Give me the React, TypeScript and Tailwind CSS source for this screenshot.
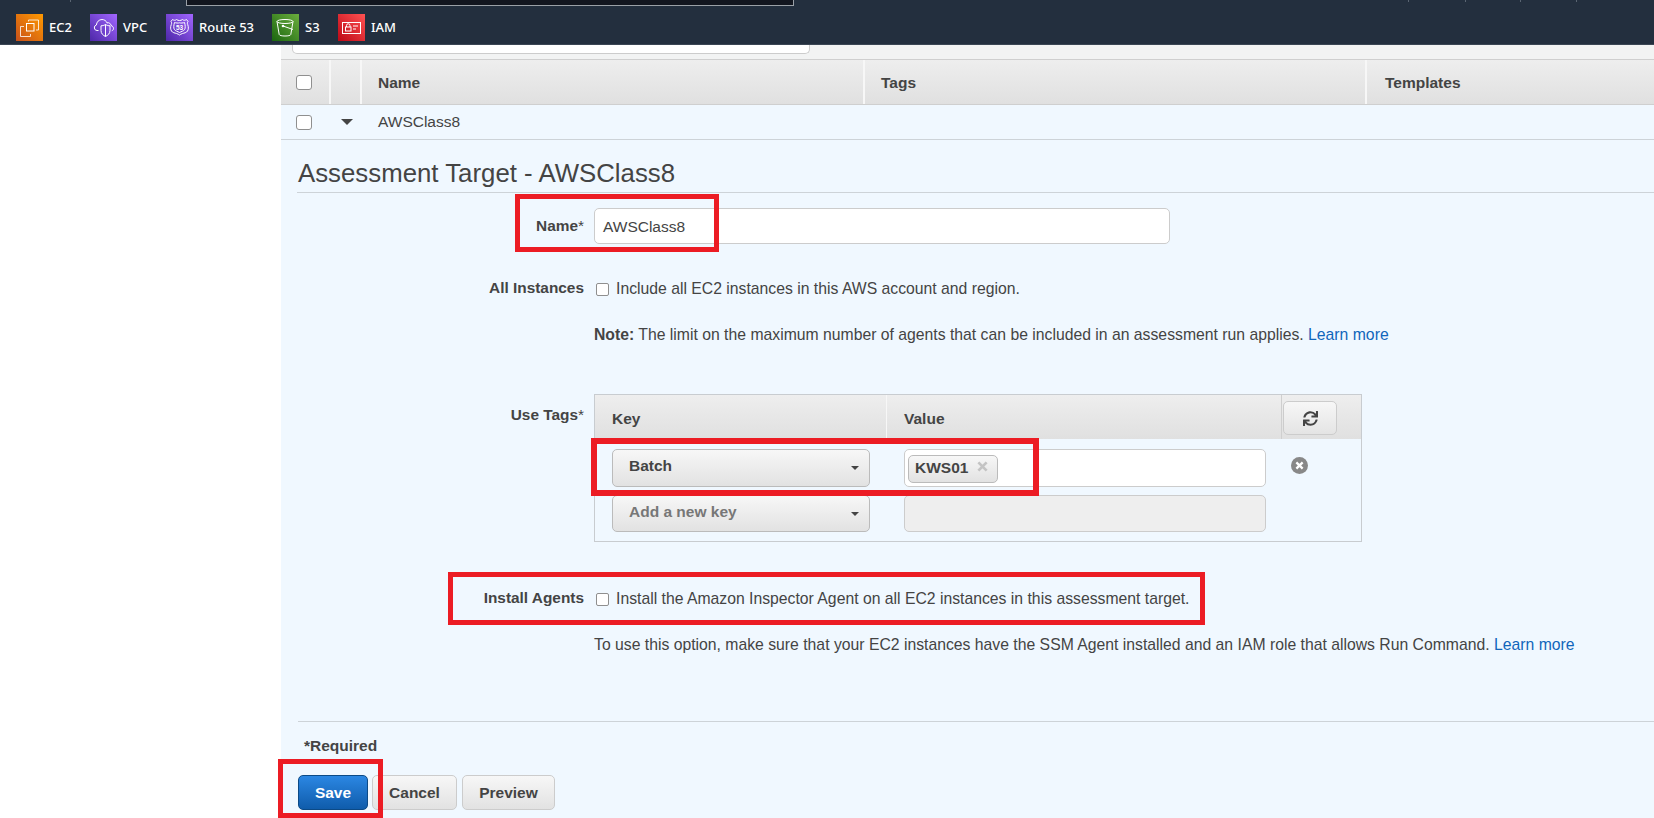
import React from "react";
import { FaSync } from "react-icons/fa";

const Ec2Icon = () => (
  <svg viewBox="0 0 27 27" className="w-[27px] h-[27px]">
    <defs>
      <linearGradient id="ec2g" x1="0" y1="1" x2="1" y2="0">
        <stop offset="0" stopColor="#c8511b" />
        <stop offset="1" stopColor="#ff9900" />
      </linearGradient>
    </defs>
    <rect width="27" height="27" fill="url(#ec2g)" />
    <g fill="none" stroke="#fff" strokeWidth="1">
      <rect x="10.5" y="9.5" width="7.5" height="7.5" />
      <path d="M12.5 7.5v-1.5h10v10h-2.5M8 12.5H4.500v10h10v-2.500" opacity=".8" />
    </g>
  </svg>
);

const VpcIcon = () => (
  <svg viewBox="0 0 27 27" className="w-[27px] h-[27px]">
    <defs>
      <linearGradient id="vpcg" x1="0" y1="1" x2="1" y2="0">
        <stop offset="0" stopColor="#4d27a8" />
        <stop offset="1" stopColor="#a166ff" />
      </linearGradient>
    </defs>
    <rect width="27" height="27" fill="url(#vpcg)" />
    <g fill="none" stroke="#fff" strokeWidth="1">
      <path d="M8.5 16.5H7a2.8 2.8 0 0 1-.6-5.5c.2-3 2.500-5.500 5.600-5.500 2.300 0 4.200 1.300 5 3.400a3 3 0 0 1 4 2.600c1.500.4 2.500 1.700 2.500 3 0 1-.7 2-1.700 2.300" />
      <path d="M15.500 10.500c1.700 1 3 1.300 4.500 1.300v4.700c0 3-2 4.800-4.500 6-2.500-1.200-4.500-3-4.500-6v-4.700c1.500 0 2.800-.3 4.500-1.300z" />
      <path d="M15.500 10.500v12" />
    </g>
  </svg>
);

const Route53Icon = () => (
  <svg viewBox="0 0 27 27" className="w-[27px] h-[27px]">
    <defs>
      <linearGradient id="r53g" x1="0" y1="1" x2="1" y2="0">
        <stop offset="0" stopColor="#4d27a8" />
        <stop offset="1" stopColor="#a166ff" />
      </linearGradient>
    </defs>
    <rect width="27" height="27" fill="url(#r53g)" />
    <g fill="none" stroke="#fff" strokeWidth="1">
      <path d="M6.500 5.500c1.500 1 3 1 4 0 1 .8 2 1 3 1s2-.2 3-1c1 1 2.500 1 4 0l1.500 2c-.8 1-.8 2-.3 3 1 2.500.8 5-.2 6.500-1 1.800-3.500 2-5 2.500-1.300.4-2.300 1-3 1.500-.7-.5-1.700-1.100-3-1.500-1.500-.5-4-.7-5-2.500-1-1.500-1.200-4-.2-6.500.5-1 .5-2-.3-3z" />
      <path d="M8.500 8.500c1.500.5 3.500.8 5 .3 1.500.5 3.500.2 5-.3.800 2.500 1 5.500.2 7-1 1.500-3.500 2-5.200 3-1.700-1-4.200-1.500-5.200-3-.8-1.500-.6-4.500.2-7z" />
    </g>
    <text x="13.5" y="15.8" textAnchor="middle" fontSize="6.5" fontFamily="'Liberation Sans',sans-serif" fontWeight="700" fill="#fff">53</text>
  </svg>
);

const S3Icon = () => (
  <svg viewBox="0 0 27 27" className="w-[27px] h-[27px]">
    <defs>
      <linearGradient id="s3g" x1="0" y1="1" x2="1" y2="0">
        <stop offset="0" stopColor="#1b660f" />
        <stop offset="1" stopColor="#6cae3e" />
      </linearGradient>
    </defs>
    <rect width="27" height="27" fill="url(#s3g)" />
    <g fill="none" stroke="#fff" strokeWidth="1">
      <ellipse cx="13" cy="7.5" rx="8" ry="2" />
      <path d="M5 7.500l2.200 13c.3 1 2.700 1.500 5.800 1.500s5.500-.5 5.800-1.500l2.200-13" />
      <path d="M11 12l10 3.500" />
    </g>
    <circle cx="11" cy="12" r="1.300" fill="#fff" />
  </svg>
);

const IamIcon = () => (
  <svg viewBox="0 0 27 27" className="w-[27px] h-[27px]">
    <defs>
      <linearGradient id="iamg" x1="0" y1="1" x2="1" y2="0">
        <stop offset="0" stopColor="#bd0816" />
        <stop offset="1" stopColor="#ff5252" />
      </linearGradient>
    </defs>
    <rect width="27" height="27" fill="url(#iamg)" />
    <g fill="none" stroke="#fff" strokeWidth="1">
      <rect x="4.5" y="8.5" width="18" height="11" />
      <rect x="7.5" y="13" width="5.5" height="4" />
      <path d="M8.500 13v-1.500a1.700 1.700 0 0 1 3.500 0V13M15 12h5M15 15h3" />
    </g>
  </svg>
);

const services = [
  { name: "EC2", icon: <Ec2Icon />, cls: "w-[74px]" },
  { name: "VPC", icon: <VpcIcon />, cls: "w-[76px]" },
  { name: "Route 53", icon: <Route53Icon />, cls: "w-[106px]" },
  { name: "S3", icon: <S3Icon />, cls: "w-[66px]" },
  { name: "IAM", icon: <IamIcon />, cls: "w-[70px]" },
];

const Checkbox = ({ small }: { small?: boolean }) => (
  <span
    className={`inline-block shrink-0 bg-white border border-[#8f8f8f] ${
      small ? "w-[13px] h-[13px] rounded-[2px]" : "w-[16px] h-[15px] rounded-[3px]"
    }`}
  />
);

const Dropdown = ({ label, muted, height, textClass }: { label: string; muted?: boolean; height: string; textClass: string }) => (
  <div className={`flex items-center justify-between w-[258px] pl-[16px] pr-[10px] rounded-[5px] border border-[#bbb] bg-linear-to-b from-[#f7f7f7] to-[#e2e2e2] ${height}`}>
    <span className={`font-bold text-[15.5px] ${textClass} ${muted ? "text-[#777]" : "text-[#444]"}`}>{label}</span>
    <span className="inline-block w-0 h-0 border-x-[4px] border-x-transparent border-t-[4px] border-t-[#444]" />
  </div>
);

const Field = ({
  label,
  children,
  className,
  labelClass,
}: {
  label: React.ReactNode;
  children: React.ReactNode;
  className?: string;
  labelClass?: string;
}) => (
  <div className={`flex items-start ${className ?? ""}`}>
    <div className={`w-[313px] shrink-0 pr-[10px] text-right font-bold text-[15.4px] text-[#444] ${labelClass ?? ""}`}>{label}</div>
    <div className="flex-1 min-w-0">{children}</div>
  </div>
);

const Btn = ({ children, className }: { children: React.ReactNode; className: string }) => (
  <button className={`h-[35px] rounded-[5px] border font-bold text-[15.5px] ${className}`}>{children}</button>
);

const RedBox = ({ className }: { className: string }) => (
  <div className={`absolute border-[#ec1c24] pointer-events-none ${className}`} />
);

export default function App() {
  return (
    <div className="relative w-[1654px] h-[818px] overflow-hidden bg-white flex flex-col text-[#444] font-['Liberation_Sans',Arial,sans-serif]">
      <header className="relative h-[45px] shrink-0 bg-[#232f3e] border-b border-[#3b4654]">
        <div className="absolute left-[186px] top-0 w-[608px] h-[6px] bg-[#12161f] border-x border-b border-[#9aa0a6]" />
        <span className="absolute left-[70px] top-0 w-px h-[2px] bg-[#5a6572]" />
        <span className="absolute left-[1408px] top-0 w-px h-[2px] bg-[#5a6572]" />
        <span className="absolute left-[1465px] top-0 w-px h-[2px] bg-[#5a6572]" />
        <span className="absolute left-[1520px] top-0 w-px h-[2px] bg-[#5a6572]" />
        <span className="absolute left-[1576px] top-0 w-px h-[2px] bg-[#5a6572]" />
        <nav className="flex items-center h-full pl-[16px] pt-[10px] font-['Noto_Sans',sans-serif]">
          {services.map((s) => (
            <div key={s.name} className={`flex items-center gap-[6px] shrink-0 ${s.cls}`}>
              {s.icon}
              <span className="text-[13px] font-medium text-white mt-[1px]">{s.name}</span>
            </div>
          ))}
        </nav>
      </header>

      <div className="flex flex-1 min-h-0">
        <aside className="w-[281px] shrink-0" />
        <main className="flex-1 min-w-0 bg-[#f0f8ff] flex flex-col">
          <div className="bg-[#f2f3f3] h-[14px] pl-[11px] pr-[844px]">
            <div className="h-[9px] bg-white border-x border-b border-[#ccc] rounded-b-[5px]" />
          </div>
          <div className="flex h-[46px] bg-linear-to-b from-[#eeeeee] to-[#e0e0e0] border-y border-[#cfcfcf] font-bold text-[15.5px] text-[#444]">
            <div className="w-[48px] flex items-center pl-[15px]"><Checkbox /></div>
            <div className="w-[31px] border-l-2 border-[#f7f7f7]" />
            <div className="w-[503px] border-l-2 border-[#f7f7f7] pl-[16px] pt-[1px] flex items-center">Name</div>
            <div className="w-[502px] border-l-2 border-[#f7f7f7] pl-[16px] pt-[1px] flex items-center">Tags</div>
            <div className="flex-1 border-l-2 border-[#f7f7f7] pl-[18px] pt-[1px] flex items-center">Templates</div>
          </div>
          <div className="flex items-center h-[35px] border-b border-[#cdd3d8] text-[15.5px]">
            <div className="w-[60px] pl-[15px] flex items-center"><Checkbox /></div>
            <div className="w-[37px] flex items-center">
              <span className="inline-block w-0 h-0 border-x-[6px] border-x-transparent border-t-[6px] border-t-[#444]" />
            </div>
            <span className="-mt-[1px]">AWSClass8</span>
          </div>

          <h1 className="ml-[16px] pl-[1px] mt-[20px] pb-[5px] border-b border-[#cdd3d8] text-[25.8px] leading-[27px] font-normal text-[#444]">
            Assessment Target - AWSClass8
          </h1>

          <Field label={<>Name<span className="font-normal">*</span></>} className="mt-[15px] leading-[36px]">
            <div className="w-[576px] h-[36px] px-[8px] rounded-[5px] border border-[#ccc] bg-white text-[15.5px] leading-[36px] text-[#444]">
              AWSClass8
            </div>
          </Field>

          <Field label="All Instances" className="mt-[35px]" labelClass="-mt-[3px]">
            <div className="flex items-center gap-[7px] pl-[2px] text-[15.75px] leading-[20px]">
              <Checkbox small />
              <span>Include all EC2 instances in this AWS account and region.</span>
            </div>
            <p className="mt-[26px] text-[15.75px] leading-[20px]">
              <b>Note:</b> The limit on the maximum number of agents that can be included in an assessment run applies.{" "}
              <span className="text-[#1166bb]">Learn more</span>
            </p>
          </Field>

          <Field label={<>Use Tags<span className="font-normal">*</span></>} className="mt-[49px]" labelClass="pt-[9px]">
            <div className="w-[768px] border border-[#c8ccd0]">
              <div className="flex h-[44px] bg-linear-to-b from-[#eeeeee] to-[#e0e0e0] font-bold text-[15.5px]">
                <div className="w-[291px] pl-[17px] pt-[12px]">Key</div>
                <div className="w-[395px] border-l border-[#f7f7f7] pl-[17px] pt-[12px]">Value</div>
                <div className="flex-1 border-l border-[#cfcfcf] pl-[1px] pt-[6px]">
                  <div className="w-[54px] h-[34px] rounded-[5px] border border-[#ccc] bg-linear-to-b from-[#f7f7f7] to-[#e4e4e4] flex items-center justify-center">
                    <FaSync className="w-[15px] h-[15px] text-[#444]" />
                  </div>
                </div>
              </div>
              <div className="flex pl-[17px] pt-[10px] pb-[9px]">
                <div className="flex flex-col gap-[8px] w-[258px] shrink-0">
                  <Dropdown label="Batch" height="h-[38px]" textClass="-mt-[4px]" />
                  <Dropdown label="Add a new key" muted height="h-[37px]" textClass="-mt-[3px]" />
                </div>
                <div className="flex flex-col gap-[8px] ml-[34px]">
                  <div className="w-[362px] h-[38px] rounded-[5px] border border-[#ccc] bg-white pl-[3px] pt-[5px]">
                    <div className="inline-flex items-center h-[28px] w-[90px] pl-[6px] pb-[2px] rounded-[5px] border border-[#bbb] bg-linear-to-b from-[#f7f7f7] to-[#e2e2e2] font-bold text-[15.5px]">
                      KWS01
                      <svg viewBox="0 0 12 12" className="ml-[9px] -mt-[3px] w-[11px] h-[11px]" stroke="#c4c4c4" strokeWidth="3">
                        <path d="M1.5 1.5l9 9M10.500 1.500l-9 9" />
                      </svg>
                    </div>
                  </div>
                  <div className="w-[362px] h-[37px] rounded-[5px] border border-[#ccc] bg-[#eeeeee]" />
                </div>
                <div className="ml-[25px] mt-[8px] w-[17px] h-[17px] rounded-full bg-[#888] flex items-center justify-center">
                  <svg viewBox="0 0 10 10" className="w-[9px] h-[9px]" stroke="#fff" strokeWidth="2.5">
                    <path d="M1.5 1.5l7 7M8.500 1.500l-7 7" />
                  </svg>
                </div>
              </div>
            </div>
          </Field>

          <Field label="Install Agents" className="mt-[47px]" labelClass="-mt-[3px]">
            <div className="flex items-center gap-[7px] pl-[2px] text-[15.75px] leading-[20px]">
              <Checkbox small />
              <span>Install the Amazon Inspector Agent on all EC2 instances in this assessment target.</span>
            </div>
            <p className="mt-[26px] text-[15.75px] leading-[20px]">
              To use this option, make sure that your EC2 instances have the SSM Agent installed and an IAM role that allows Run Command.{" "}
              <span className="text-[#1166bb]">Learn more</span>
            </p>
          </Field>

          <div className="ml-[17px] mt-[66px] border-t border-[#cdd3d8]" />
          <div className="ml-[23px] mt-[15px] font-bold text-[15.5px] leading-[18px]">*Required</div>
          <div className="ml-[17px] mt-[20px] flex items-start">
            <Btn className="w-[70px] border-[#0c4a86] text-white bg-linear-to-b from-[#2b87e3] to-[#0f5cab]">Save</Btn>
            <Btn className="w-[85px] ml-[4px] border-[#ccc] bg-linear-to-b from-[#f7f7f7] to-[#e2e2e2]">Cancel</Btn>
            <Btn className="w-[93px] ml-[5px] border-[#ccc] bg-linear-to-b from-[#f7f7f7] to-[#e2e2e2]">Preview</Btn>
          </div>
        </main>
      </div>

      <RedBox className="border-[5px] left-[515px] top-[194px] w-[204px] h-[58px]" />
      <RedBox className="border-[6px] left-[591px] top-[438px] w-[448px] h-[58px]" />
      <RedBox className="border-[5px] left-[448px] top-[572px] w-[757px] h-[53px]" />
      <RedBox className="border-[5px] left-[278px] top-[759px] w-[105px] h-[59px]" />
    </div>
  );
}
